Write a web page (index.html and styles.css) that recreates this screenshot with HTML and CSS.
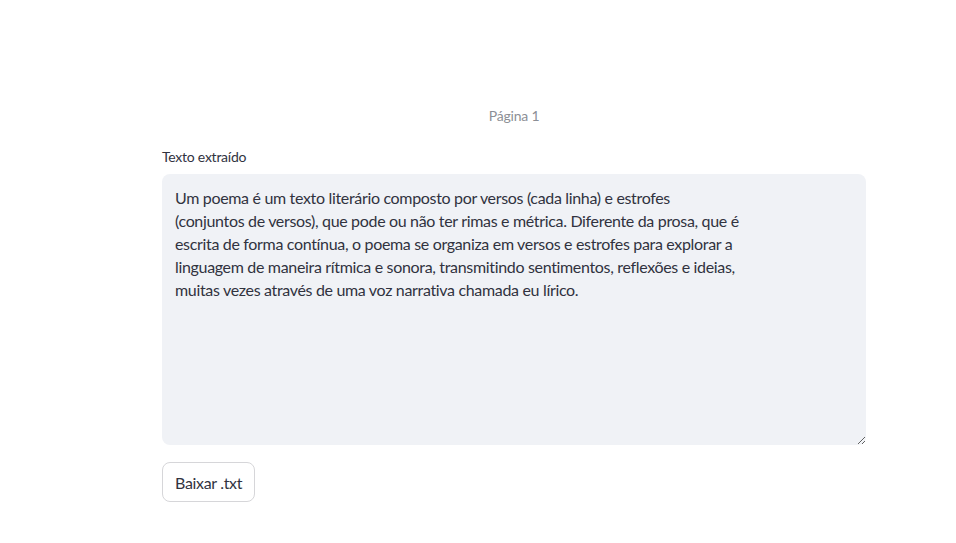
FILE: index.html
```html
<!DOCTYPE html>
<html lang="pt">
<head>
<meta charset="utf-8">
<link rel="stylesheet" href="styles.css">
</head>
<body>
<main class="page">
  <p class="caption">Página 1</p>
  <div class="field">
    <label class="label" for="txt">Texto extraído</label>
    <textarea id="txt" class="area">Um poema é um texto literário composto por versos (cada linha) e estrofes
(conjuntos de versos), que pode ou não ter rimas e métrica. Diferente da prosa, que é
escrita de forma contínua, o poema se organiza em versos e estrofes para explorar a
linguagem de maneira rítmica e sonora, transmitindo sentimentos, reflexões e ideias,
muitas vezes através de uma voz narrativa chamada eu lírico.</textarea>
  </div>
  <button class="btn" type="button">Baixar .txt</button>
</main>
</body>
</html>
```
FILE: styles.css
```css
html, body {
  margin: 0;
  padding: 0;
  background: #ffffff;
}
body {
  font-family: "Source Sans Pro", "Lato", "Noto Sans", sans-serif;
  color: #31333f;
}
.page {
  width: 704px;
  margin-left: 162px;
  padding-top: 106px;
  display: flex;
  flex-direction: column;
  align-items: flex-start;
}
.caption {
  margin: 0;
  align-self: stretch;
  text-align: center;
  font-size: 14px;
  line-height: 20px;
  letter-spacing: -0.2px;
  color: #8c8f96;
}
.field {
  margin-top: 21px;
  align-self: stretch;
  display: flex;
  flex-direction: column;
}
.label {
  font-size: 14px;
  line-height: 20px;
  height: 27px;
  letter-spacing: -0.25px;
  color: #31333f;
}
.area {
  box-sizing: border-box;
  width: 704px;
  height: 271px;
  margin: 0;
  border: none;
  border-radius: 8px;
  background: #f0f2f6;
  padding: 12px 13px;
  font-family: inherit;
  font-size: 16px;
  line-height: 23px;
  letter-spacing: -0.33px;
  color: #31333f;
  outline: none;
  white-space: pre;
  overflow: hidden;
}
.btn {
  margin-top: 17px;
  box-sizing: border-box;
  height: 40px;
  padding: 0 12px;
  background: #ffffff;
  border: 1px solid #d6d6d9;
  border-radius: 8px;
  font-family: inherit;
  font-size: 16px;
  letter-spacing: -0.33px;
  color: #31333f;
}
```
